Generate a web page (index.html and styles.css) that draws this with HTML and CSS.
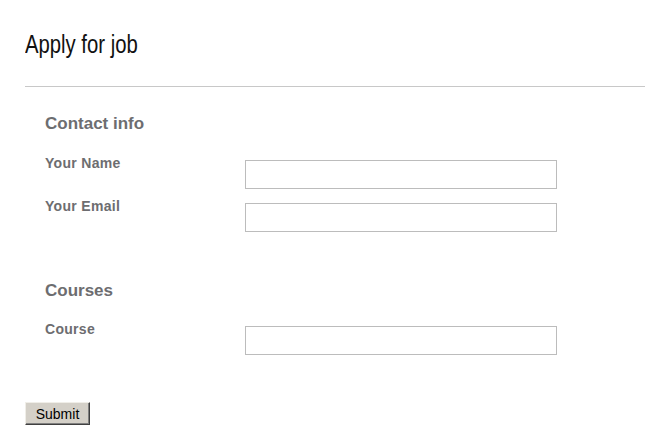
FILE: index.html
```html
<!DOCTYPE html>
<html>
<head>
<meta charset="utf-8">
<title>Apply for job</title>
<link rel="stylesheet" href="styles.css">
</head>
<body>
<div class="page">
  <h1 class="title"><span class="title-text">Apply for job</span></h1>
  <div class="rule"></div>
  <form class="form">
    <section class="group">
      <h2 class="group-title">Contact info</h2>
      <div class="row first">
        <label class="label">Your Name</label>
        <input class="field" type="text">
      </div>
      <div class="row">
        <label class="label">Your Email</label>
        <input class="field" type="text">
      </div>
    </section>
    <section class="group second">
      <h2 class="group-title">Courses</h2>
      <div class="row first">
        <label class="label">Course</label>
        <input class="field" type="text">
      </div>
    </section>
    <button class="submit" type="button">Submit</button>
  </form>
</div>
</body>
</html>
```
FILE: styles.css
```css
html, body {
  margin: 0;
  padding: 0;
  background: #fff;
}
body {
  font-family: "Liberation Sans", Arial, sans-serif;
}
.page {
  padding: 29px 12px 0 25px;
}
.title {
  margin: 0;
  font-family: "Liberation Sans Narrow", "Liberation Sans", sans-serif;
  font-weight: normal;
  font-size: 26px;
  line-height: 30px;
  color: #111;
}
.title-text {
  display: inline-block;
  transform: scaleX(0.78);
  transform-origin: left center;
}
.rule {
  margin-top: 27px;
  border-top: 1px solid #c8c8c8;
}
.form {
  margin: 0;
}
.group {
  padding-left: 20px;
  margin-top: 27px;
}
.group.second {
  margin-top: 49px;
}
.group-title {
  margin: 0;
  font-size: 17px;
  line-height: 20px;
  font-weight: bold;
  color: #6d6d70;
}
.row {
  display: flex;
  align-items: flex-start;
  margin-top: 8px;
}
.row.first {
  margin-top: 20px;
}
.group.second .row.first {
  margin-top: 19px;
}
.label {
  width: 200px;
  padding-top: 1px;
  font-size: 14px;
  line-height: 17px;
  font-weight: bold;
  letter-spacing: 0.3px;
  color: #6d6d70;
}
.field {
  box-sizing: border-box;
  width: 312px;
  height: 29px;
  margin: 6px 0 0 0;
  padding: 2px 4px;
  border: 1px solid #bcbcbc;
  background: #fff;
  font-family: "Liberation Sans", Arial, sans-serif;
  font-size: 13px;
}
.submit {
  display: block;
  box-sizing: border-box;
  margin-top: 47px;
  width: 65px;
  height: 23px;
  padding: 0;
  font-family: "Liberation Sans", Arial, sans-serif;
  font-size: 14px;
  color: #000;
  background: #d4d0c8;
  border-style: solid;
  border-width: 1px;
  border-color: #f0eee8 #404040 #404040 #f0eee8;
  box-shadow: inset -1px -1px 0 #808080;
  border-radius: 0;
}
```
